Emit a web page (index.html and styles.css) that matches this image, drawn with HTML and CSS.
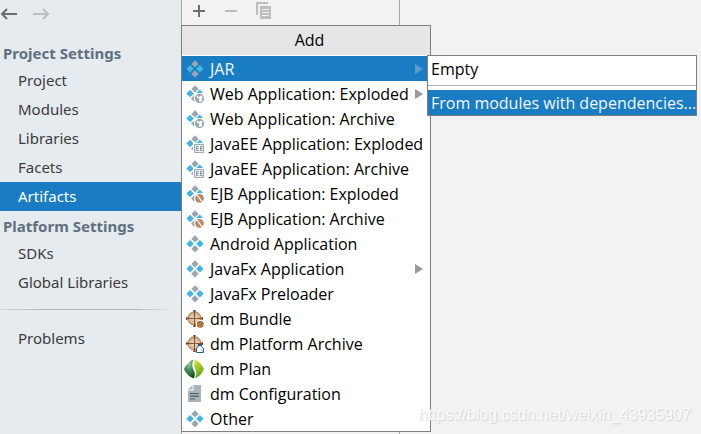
FILE: index.html
```html
<!DOCTYPE html>
<html lang="en">
<head>
<meta charset="utf-8">
<title>Project Structure</title>
<link rel="stylesheet" href="styles.css">
</head>
<body>
<svg class="defs" aria-hidden="true">
  <defs>
    <radialGradient id="leaf-dark" cx="0.45" cy="0.2" r="0.9"><stop offset="0" stop-color="#a5cfae"/><stop offset="0.45" stop-color="#3f8a50"/><stop offset="1" stop-color="#083e1c"/></radialGradient>
    <linearGradient id="leaf-light" x1="0" y1="0" x2="0.3" y2="1"><stop offset="0" stop-color="#e6ea45"/><stop offset="1" stop-color="#5c9e10"/></linearGradient>
    <radialGradient id="globe-tan"><stop offset="0" stop-color="#f6e3cb"/><stop offset="1" stop-color="#cfaa85"/></radialGradient>
    <symbol id="artifact" viewBox="0 0 18 18">
      <path fill="#9aa7b0" d="M9 .2l3.700 3.700L9 7.600 5.300 3.900zM9 10l3.700 3.700L9 17.400l-3.700-3.700z"/>
      <path fill="#40b6e0" d="M4.100 5.100l3.700 3.700-3.700 3.700L.4 8.800zM13.900 5.100l3.700 3.700-3.700 3.700-3.700-3.700z"/>
    </symbol>
    <symbol id="artifact-cut" viewBox="0 0 18 18">
      <path fill="#9aa7b0" d="M9 .2l3.700 3.700L9 7.600 5.300 3.900zM8.500 10v7L5 13.500z"/>
      <path fill="#40b6e0" d="M4.100 4.800l3.700 3.700-3.700 3.700L.4 8.500zM13.700 4.400l3.500 3.600h-7z"/>
    </symbol>
    <symbol id="web" viewBox="0 0 18 18">
      <use href="#artifact-cut"/>
      <circle cx="13.500" cy="13.500" r="5.500" fill="#fff"/>
      <circle cx="13.500" cy="13.500" r="4" fill="#fff" stroke="#9aa7b0" stroke-width="1.300"/>
      <path fill="#9aa7b0" d="M9.500 11.800l3.800 1.700v1.500l-.8 2.400a4 4 0 0 1-3-5.600zM12 9.600l3 .1-.6 1.500-2 .7zM15.800 12.700l1.700.3-.7 2.200-1.200-.8z"/>
    </symbol>
    <symbol id="javaee" viewBox="0 0 18 18">
      <use href="#artifact-cut"/>
      <path fill="#fff" d="M7 8h11v10H7z"/>
      <path fill="#edf0f2" stroke="#9aa7b0" d="M8.500 9.500h9v8h-9z"/>
      <path fill="none" stroke="#8797a1" d="M12.500 11.500h-2v4h2M10.500 13.500h2M16.500 11.500h-2v4h2M14.500 13.500h2"/>
    </symbol>
    <symbol id="ejb" viewBox="0 0 18 18">
      <use href="#artifact-cut"/>
      <circle cx="13.500" cy="13.300" r="5.300" fill="#fff"/>
      <circle cx="13.500" cy="13.300" r="4.400" fill="#b48b6b"/>
      <path fill="none" stroke="#fff" stroke-width="1.100" d="M9.500 9.500c3 1 3.400 2.500 4.200 4.200.7 1.500 1.800 2.500 3.800 3.300"/>
    </symbol>
    <symbol id="target" viewBox="0 0 18 18">
      <circle cx="8.500" cy="8.500" r="6.500" fill="url(#globe-tan)" stroke="#b98f6c" stroke-width="1.400"/>
      <path stroke="#89583d" stroke-width="1.200" d="M8.500 1v15M1 8.500h15"/>
      <path fill="#73452e" d="M7.100 0h2.800L8.500 3.500zM7.100 17h2.800l-1.400-3.500zM0 7.100v2.800l3.500-1.400zM17 7.100v2.800l-3.500-1.400z"/>
    </symbol>
    <symbol id="bundle" viewBox="0 0 18 18">
      <use href="#target"/>
      <circle cx="14.300" cy="14.300" r="4.200" fill="#fff"/>
      <circle cx="14.300" cy="14.300" r="3.400" fill="#99602e"/>
      <path fill="none" stroke="#d9a66a" d="M11.500 14.500c2 0 3.500-1 4-3M13 16.500c2-.2 3.500-1.500 4-3"/>
    </symbol>
    <symbol id="platform" viewBox="0 0 18 18">
      <use href="#target"/>
      <path fill="#fff" stroke="#315c91" d="M12.500 9.500h3v2l2 2v4h-7v-4l2-2z"/>
      <path fill="#315c91" d="M12 9h4v2h-4z"/>
      <path fill="#c7dcf0" d="M15 13h2v4h-2z"/>
    </symbol>
    <symbol id="plan" viewBox="0 0 20 20">
      <path fill="url(#leaf-dark)" d="M9.500 .5C5.500 2 2 5.500 0 10c2 4.500 5.500 8 9.500 9.500 2-2.600 1.600-5.500.2-8C8 8.500 7.600 4.700 9.500 .5z"/>
      <path fill="url(#leaf-light)" d="M10.800 .5C15 2 18 5.500 20 10c-2 4.500-5 8-9.200 9.500 1.900-3 1.900-5.600.8-8.300C10.200 8 9.600 4.500 10.800 .5z"/>
    </symbol>
    <symbol id="config" viewBox="0 0 18 18">
      <path fill="#aab4bc" d="M7.500 0H15v17H2V5.500h5.500z"/>
      <path fill="#aab4bc" d="M6.500 0v4.500H2z"/>
      <path stroke="#4f565b" stroke-width="1.200" d="M4 8.500h9M4 11.200h9M4 14h5"/>
    </symbol>
  </defs>
</svg>
<div class="dialog">
  <aside class="sidebar">
    <div class="history">
      <button type="button" aria-label="Back"><svg width="17" height="14" viewBox="0 0 17 14"><path d="M17 7H2M7 2L2 7l5 5"/></svg></button>
      <button type="button" class="off" aria-label="Forward"><svg width="17" height="14" viewBox="0 0 17 14"><path d="M0 7h15M10 2l5 5-5 5"/></svg></button>
    </div>
    <nav>
      <h2>Project Settings</h2>
      <a href="#project">Project</a>
      <a href="#modules">Modules</a>
      <a href="#libraries">Libraries</a>
      <a href="#facets">Facets</a>
      <a href="#artifacts" class="current">Artifacts</a>
      <h2>Platform Settings</h2>
      <a href="#sdks">SDKs</a>
      <a href="#global">Global Libraries</a>
      <hr>
      <a href="#problems">Problems</a>
    </nav>
  </aside>
  <section class="list">
    <div class="toolbar">
      <button type="button" aria-label="Add"><svg width="18" height="18" viewBox="0 0 18 18"><path fill="none" stroke="#6e6e6e" stroke-width="2" d="M9 3v12M3 9h12"/></svg></button>
      <button type="button" aria-label="Remove"><svg width="18" height="18" viewBox="0 0 18 18"><path stroke="#bdbdbd" stroke-width="2" d="M3 9h12"/></svg></button>
      <button type="button" aria-label="Copy"><svg width="18" height="18" viewBox="0 0 18 18"><path fill="none" stroke="#bdbdbd" stroke-width="2" d="M3 13V1h11"/><path fill="#bdbdbd" d="M6 4h11v13H6z"/><path stroke="#f2f2f2" d="M8 7.500h7M8 10.500h7M8 13.500h7"/></svg></button>
    </div>
    <div class="menu add-menu" role="menu" aria-label="Add">
      <div class="title">Add</div>
      <button type="button" role="menuitem" class="selected"><svg><use href="#artifact"/></svg>JAR<i class="more"></i></button>
      <button type="button" role="menuitem"><svg><use href="#web"/></svg>Web Application: Exploded<i class="more"></i></button>
      <button type="button" role="menuitem"><svg><use href="#web"/></svg>Web Application: Archive</button>
      <button type="button" role="menuitem"><svg><use href="#javaee"/></svg>JavaEE Application: Exploded</button>
      <button type="button" role="menuitem"><svg><use href="#javaee"/></svg>JavaEE Application: Archive</button>
      <button type="button" role="menuitem"><svg><use href="#ejb"/></svg>EJB Application: Exploded</button>
      <button type="button" role="menuitem"><svg><use href="#ejb"/></svg>EJB Application: Archive</button>
      <button type="button" role="menuitem"><svg><use href="#artifact"/></svg>Android Application</button>
      <button type="button" role="menuitem"><svg><use href="#artifact"/></svg>JavaFx Application<i class="more"></i></button>
      <button type="button" role="menuitem"><svg><use href="#artifact"/></svg>JavaFx Preloader</button>
      <button type="button" role="menuitem"><svg><use href="#bundle"/></svg>dm Bundle</button>
      <button type="button" role="menuitem"><svg><use href="#platform"/></svg>dm Platform Archive</button>
      <button type="button" role="menuitem"><svg class="wide"><use href="#plan"/></svg>dm Plan</button>
      <button type="button" role="menuitem"><svg><use href="#config"/></svg>dm Configuration</button>
      <button type="button" role="menuitem"><svg><use href="#artifact"/></svg>Other</button>
      <div class="menu submenu" role="menu" aria-label="JAR">
        <button type="button" role="menuitem">Empty</button>
        <hr>
        <button type="button" role="menuitem" class="selected">From modules with dependencies...</button>
      </div>
    </div>
  </section>
  <main class="details"></main>
  <div class="watermark">https://blog.csdn.net/weixin_43935907</div>
</div>
</body>
</html>
```

FILE: styles.css
```css
* { box-sizing: border-box; }

body {
  margin: 0;
  background: #f2f2f2;
  color: #000;
  font: 16px/20px "Open Sans", "Noto Sans", sans-serif;
}

.defs { position: absolute; width: 0; height: 0; }

button {
  margin: 0;
  padding: 0;
  border: 0;
  background: none;
  color: inherit;
  font: inherit;
  text-align: left;
}

.dialog {
  position: relative;
  display: grid;
  grid-template-columns: 181px 219px 1fr;
  min-height: 100vh;
  overflow: hidden;
}

.sidebar { background: #e6ebef; font-family: "Noto Sans", sans-serif; font-size: 15px; }

.history { display: flex; gap: 16px; height: 41px; }
.history svg { display: block; fill: none; stroke: #6e6e6e; stroke-width: 2; }
.history .off svg { stroke: #bdbdbd; }
.history button { height: 28px; }

.sidebar h2 {
  margin: 0;
  padding-left: 3px;
  color: #60707f;
  font-size: 15px;
  line-height: 25px;
}

.sidebar a {
  display: block;
  padding-left: 18px;
  color: #3c3c3c;
  line-height: 29px;
  text-decoration: none;
}

.sidebar .current { margin-bottom: 3px; background: #1a7dc4; color: #fff; }

.sidebar hr {
  height: 1px;
  margin: 12px 6px 14px 0;
  border: 0;
  background: linear-gradient(90deg, #d5d9dc, #adb1b4 30%, #adb1b4 75%, #e6ebef);
}

.list {
  position: relative;
  border-right: 1px solid #a8a8a8;
  border-left: 1px solid #a8a8a8;
}

.toolbar { display: flex; gap: 14px; padding: 2px 8px; }
.toolbar svg { display: block; }

.menu { position: absolute; border: 1px solid #7f7f7f; background: #fff; }
.add-menu { top: 25px; left: -1px; width: 250px; }

.title {
  margin-bottom: 1px;
  padding-left: 7px;
  background: #e6e6e6;
  line-height: 29px;
  text-align: center;
}

.menu button {
  display: flex;
  align-items: center;
  gap: 6px;
  width: 100%;
  height: 25px;
  padding: 0 7px 0 4px;
  white-space: nowrap;
}

.menu .selected { background: #1a7dc4; color: #f2f6fa; }
.add-menu svg { flex: none; width: 18px; height: 18px; }
.add-menu .wide { width: 20px; height: 20px; margin-left: -2px; }

.more {
  margin-left: auto;
  border: 5px solid transparent;
  border-right: 0;
  border-left: 8px solid #999;
}

.selected .more { border-left-color: #5b9dcb; }

.menu.submenu { top: 29px; left: 245px; width: 270px; }
.submenu hr { height: 1px; margin: 4px 0; border: 0; background: #b2b2b2; }
.menu.submenu button { padding: 0 3px; }

.watermark {
  position: absolute;
  right: 10px;
  bottom: 9px;
  color: #fafafa;
  font: 16px/20px "Liberation Sans", sans-serif;
  text-shadow: 1px 1px 1px #d2d2d2;
}
```
